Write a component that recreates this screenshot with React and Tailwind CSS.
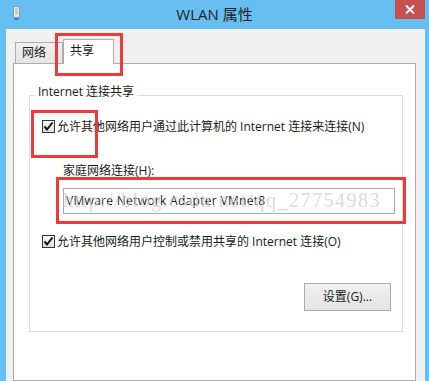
import React from 'react';

const uiFont = "font-[family-name:'Open_Sans','Noto_Sans_CJK_SC',sans-serif]";

function AdapterIcon() {
    return (
        <svg width="9" height="17" viewBox="0 0 9 17">
            <rect x="1.5" y="0.5" width="6" height="11" rx="1.5" fill="#e9eef2" stroke="#8a949c" />
            <rect x="3" y="2" width="3" height="7" fill="#c4ccd2" />
            <rect x="2" y="12" width="5" height="2" fill="#2f8fd8" />
            <rect x="3" y="14" width="3" height="2" fill="#64b8f0" />
        </svg>
    );
}

function CheckBox() {
    return (
        <span className="w-[13px] h-[13px] border border-[#333] bg-gradient-to-b from-[#f6f6f6] to-[#dedede] flex items-center justify-center shrink-0">
            <svg width="11" height="11" viewBox="0 0 11 11">
                <path d="M1.5 5.5 L4 8.5 L9.5 1.5" fill="none" stroke="#111" strokeWidth="2" />
            </svg>
        </span>
    );
}

export default function App() {
    return (
        <div className={`relative w-[429px] h-[381px] bg-[#66bff0] flex flex-col overflow-hidden text-[12px] text-[#1a1a1a] ${uiFont}`}>
            {/* Title bar */}
            <div className="h-[29px] shrink-0 grid grid-cols-[1fr_auto_1fr] items-start">
                <div className="pl-[12px] pt-[6px]">
                    <AdapterIcon />
                </div>
                <div className="pt-[3px] text-[15px] leading-[22px] text-[#222]">WLAN 属性</div>
                <div className="flex justify-end pr-[4px]">
                    <div className="w-[30px] h-[19px] bg-[#c75050] flex items-center justify-center">
                        <svg width="10" height="9" viewBox="0 0 10 9">
                            <path d="M1 0.5 L9 8.5 M9 0.5 L1 8.5" stroke="#fff" strokeWidth="2" />
                        </svg>
                    </div>
                </div>
            </div>

            {/* Client area */}
            <div className="flex-1 ml-[6px] mr-[4px] bg-[#f0f0f0] flex flex-col pt-[10px] pl-[7px] pr-[9px]">
                {/* Tabs */}
                <div className="flex items-end h-[24px] shrink-0">
                    <div className="ml-[2px] w-[48px] h-[21px] border border-b-0 border-[#acacac] bg-gradient-to-b from-[#f0f0f0] to-[#e5e5e5] flex items-center pl-[6px]">
                        网络
                    </div>
                    <div className="relative z-10 w-[51px] h-[25px] -mb-[1px] border border-b-0 border-[#acacac] bg-white flex items-center pl-[6px] pb-[2px]">
                        共享
                    </div>
                </div>

                {/* Tab panel */}
                <div className="flex-1 border border-[#acacac] bg-white flex flex-col">
                    {/* Group box */}
                    <div className="relative mt-[31px] ml-[15px] mr-[12px] h-[237px] border border-[#dcdcdc] flex flex-col">
                        <span className="absolute -top-[12px] left-[5px] px-[3px] bg-white leading-[16px]">
                            Internet 连接共享
                        </span>

                        <div className="flex items-center h-[17px] mt-[22px] pl-[12px] gap-[2px]">
                            <CheckBox />
                            <span>允许其他网络用户通过此计算机的 Internet 连接来连接(N)</span>
                        </div>

                        <div className="mt-[28px] pl-[33px] leading-[16px]">家庭网络连接(H):</div>

                        <div className="mt-[9px] ml-[33px] w-[332px] h-[26px] border border-[#ababab] bg-white flex items-center pl-[2px] tracking-[0.3px]">
                            VMware Network Adapter VMnet8
                        </div>

                        <div className="flex items-center h-[17px] mt-[19px] pl-[12px] gap-[2px]">
                            <CheckBox />
                            <span>允许其他网络用户控制或禁用共享的 Internet 连接(O)</span>
                        </div>

                        <button className="self-end mt-[33px] mr-[11px] w-[87px] h-[28px] border border-[#acacac] bg-gradient-to-b from-[#f0f0f0] to-[#e5e5e5] flex items-center justify-center">
                            设置(G)...
                        </button>
                    </div>
                </div>
            </div>

            {/* Watermark */}
            <span className="absolute left-[63px] top-[187px] text-[20px] leading-[26px] tracking-[1.5px] text-[#d2d2d2]/80 font-[family-name:'Liberation_Serif',serif] pointer-events-none">
                http://blog.csdn.net/qq_27754983
            </span>

            {/* Red annotation boxes */}
            <div className="absolute left-[55px] top-[33px] w-[68px] h-[43px] border-[3px] border-[#f0393b] pointer-events-none" />
            <div className="absolute left-[31px] top-[110px] w-[67px] h-[48px] border-[3px] border-[#f0393b] pointer-events-none" />
            <div className="absolute left-[56px] top-[177px] w-[350px] h-[47px] border-[3px] border-[#f0393b] pointer-events-none" />
        </div>
    );
}
